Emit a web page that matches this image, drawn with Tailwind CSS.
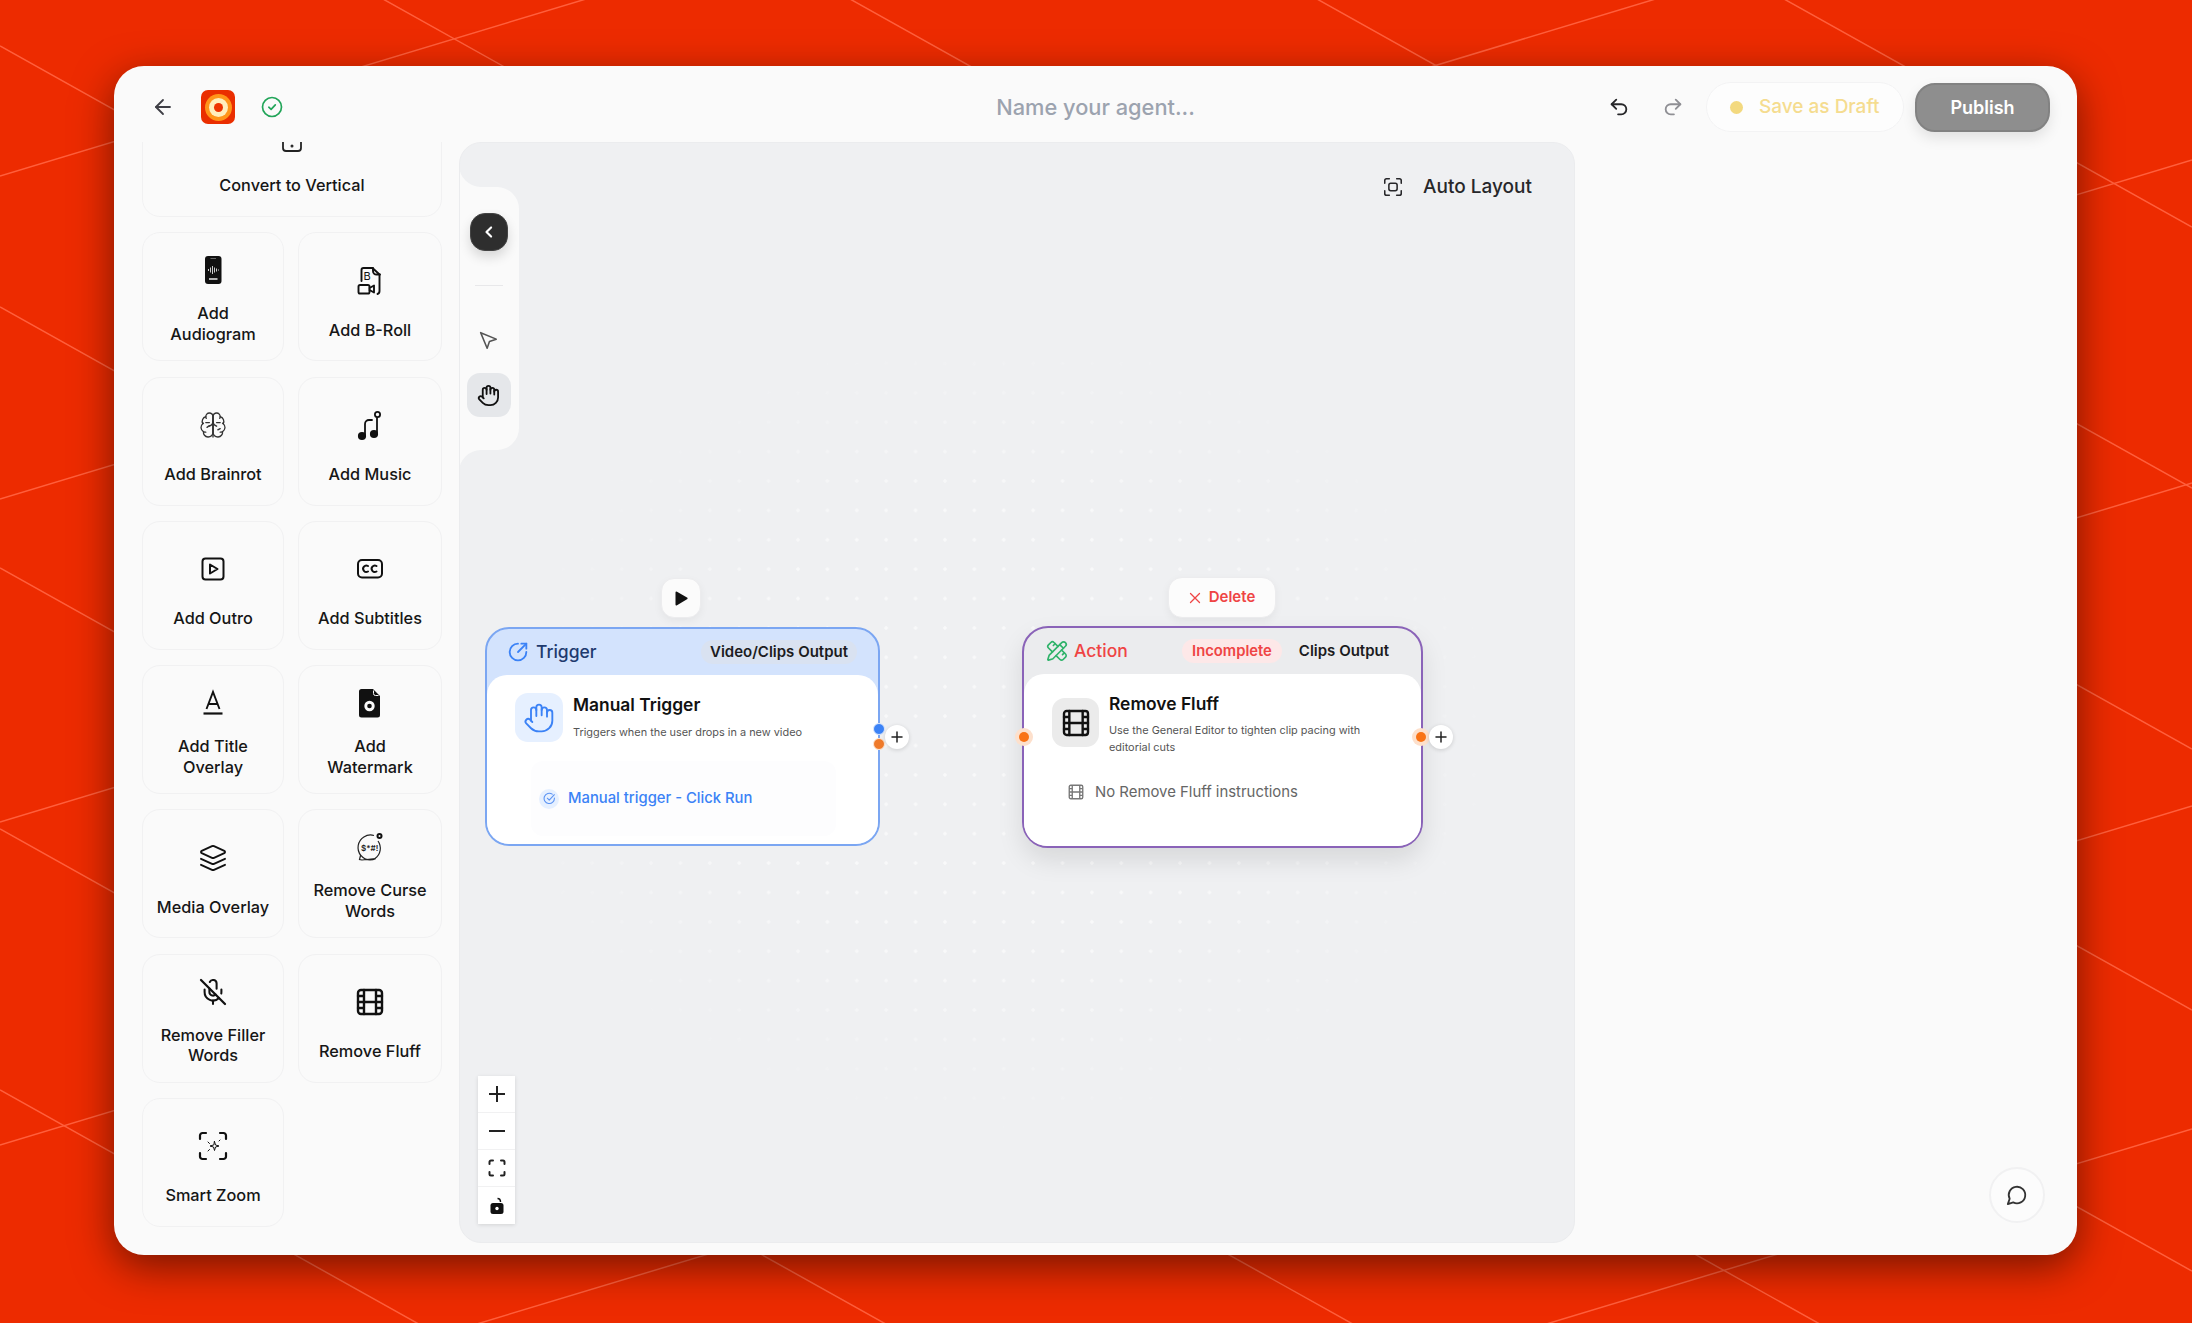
<!DOCTYPE html>
<html lang="en">
<head>
<meta charset="UTF-8">
<title>Agent builder</title>
<script src="https://cdn.jsdelivr.net/npm/@tailwindcss/browser@4"></script>
</head>
<body class="relative w-[2192px] h-[1323px] overflow-hidden bg-[#ed2b00] font-['Inter',sans-serif] text-[#161616]">

<!-- background lines -->
<svg class="absolute inset-0" width="2192" height="1323" fill="none" stroke="#ff5f3c" stroke-width="1.5">
  <path d="M0 -998L2192 227M0 -737L2192 488M0 -476L2192 749M0 -215L2192 1010M0 46L2192 1271M0 307L2192 1532M0 568L2192 1793M0 829L2192 2054M0 1090L2192 2315"/>
  <path d="M0 176L2192 -486M0 499L2192 -163M0 822L2192 160M0 1145L2192 483M0 1468L2192 806M0 1791L2192 1129"/>
</svg>

<div class="absolute left-[114px] top-[66px] w-[1963px] h-[1189px] flex flex-col rounded-[30px] bg-[#fafafa] shadow-[0_12px_40px_rgba(0,0,0,0.5)] overflow-hidden">

  <!-- header -->
  <header class="h-[76px] shrink-0 grid grid-cols-[1fr_auto_1fr] items-center pt-[6px] px-[27px]">
    <div class="flex items-center pl-[10px]">
      <svg class="w-6 h-6" viewBox="0 0 24 24" fill="none" stroke="#3f3f46" stroke-width="1.8" stroke-linecap="round" stroke-linejoin="round"><path d="m12 19-7-7 7-7"/><path d="M19 12H5"/></svg>
      <div class="ml-[26px] w-[34px] h-[34px] rounded-[7px] bg-[#ea2e00] flex items-center justify-center">
        <div class="w-[27px] h-[27px] rounded-full bg-[#ff951a] flex items-center justify-center">
          <div class="w-[19px] h-[19px] rounded-full bg-[#ffeebd] flex items-center justify-center">
            <div class="w-[9px] h-[9px] rounded-full bg-[#ee3300]"></div>
          </div>
        </div>
      </div>
      <svg class="ml-[26px] w-[22px] h-[22px]" viewBox="0 0 22 22" fill="none" stroke="#22a559" stroke-width="1.7" stroke-linecap="round" stroke-linejoin="round"><circle cx="11" cy="11" r="9.5"/><path d="m7.8 11.2 2.3 2.1 4.2-4.4"/></svg>
    </div>
    <div class="text-[21.8px] font-medium text-[#9ca3af]">Name your agent...</div>
    <div class="flex items-center justify-end">
      <svg class="w-[22px] h-[22px]" viewBox="0 0 24 24" fill="none" stroke="#27272a" stroke-width="2" stroke-linecap="round" stroke-linejoin="round"><path d="M9 14 4 9l5-5"/><path d="M4 9h10.5a5.5 5.5 0 0 1 0 11H11"/></svg>
      <svg class="ml-[32px] w-[22px] h-[22px]" viewBox="0 0 24 24" fill="none" stroke="#8f8f94" stroke-width="2" stroke-linecap="round" stroke-linejoin="round"><path d="m15 14 5-5-5-5"/><path d="M20 9H9.5a5.5 5.5 0 0 0 0 11H13"/></svg>
      <button class="ml-[22px] w-[198px] h-[50px] flex items-center pl-[23px] gap-[16px] rounded-[25px] bg-[#fdfdfd] border border-[#f3f3f4] text-[19px] font-medium text-[#f5dc8f]">
        <span class="w-[13px] h-[13px] rounded-full bg-[#f3d97f]"></span>Save as Draft
      </button>
      <button class="ml-[11px] w-[135px] h-[49px] rounded-[20px] bg-[#8e8e8e] border-2 border-[#828282] shadow-[0_6px_14px_rgba(0,0,0,0.1)] text-[18px] font-semibold text-white">Publish</button>
    </div>
  </header>

  <div class="flex-1 min-h-0 flex pb-3">

    <!-- node library -->
    <aside class="w-[345px] shrink-0 overflow-hidden pl-[28px]">
      <div class="-mt-[54px] grid grid-cols-[142px_144px] auto-rows-[129px] gap-x-[14px] gap-y-[15.3px] text-[16.3px] leading-[20.5px] font-medium text-center">

        <div class="col-span-2 flex flex-col items-center justify-center gap-[21px] pt-[9px] rounded-[18px] border-[1.5px] border-[#f1f1f2]">
          <svg class="w-9 h-9" viewBox="0 0 36 36" fill="none" stroke="#222" stroke-width="1.8"><rect x="9" y="5" width="18" height="28" rx="3"/><circle cx="18" cy="28" r=".6"/></svg>
          <span>Convert to Vertical</span>
        </div>

        <div class="flex flex-col items-center justify-center gap-[15px] pt-[3px] rounded-[18px] border-[1.5px] border-[#f1f1f2]">
          <svg class="w-9 h-9" viewBox="0 0 36 36"><rect x="10" y="4" width="16.5" height="28" rx="3" fill="#111"/><path d="M15.5 6.5h5.5" stroke="#666" stroke-width="1"/><path d="M13.5 17v2M15.5 15.5v5M17.5 14v8M19.5 15.5v5M21.5 16.5v3M23.5 17.5v1" stroke="#ccc" stroke-width="1"/><path d="M14 27h8.5" stroke="#ddd" stroke-width="1.6"/></svg>
          <span>Add<br>Audiogram</span>
        </div>
        <div class="flex flex-col items-center justify-center gap-[21px] pt-[9px] rounded-[18px] border-[1.5px] border-[#f1f1f2]">
          <svg class="w-9 h-9" viewBox="0 0 36 36" fill="none" stroke="#111" stroke-width="1.9" stroke-linecap="round" stroke-linejoin="round"><path d="M9.5 18V7a2 2 0 0 1 2-2h9l7 6.5V28a3 3 0 0 1-2 3"/><path d="M21 5v3a3.500 3.500 0 0 0 3.500 3.500H28"/><rect x="6.500" y="22" width="11" height="8.500" rx="1.600"/><path d="m17.500 25 4.500-2.500v7L17.500 27"/><text x="11.500" y="16.500" font-size="11" font-weight="400" fill="#111" stroke="none" font-family="Inter">B</text></svg>
          <span>Add B-Roll</span>
        </div>

        <div class="flex flex-col items-center justify-center gap-[21px] pt-[9px] rounded-[18px] border-[1.5px] border-[#f1f1f2]">
          <svg class="w-9 h-9" viewBox="-3 -3 30 30" fill="none" stroke="#333" stroke-width="1.1" stroke-linecap="round" stroke-linejoin="round"><path d="M12 5a3 3 0 1 0-5.997.125 4 4 0 0 0-2.526 5.770 4 4 0 0 0 .556 6.588A4 4 0 1 0 12 18Z"/><path d="M12 5a3 3 0 1 1 5.997.125 4 4 0 0 1 2.526 5.770 4 4 0 0 1-.556 6.588A4 4 0 1 1 12 18Z"/><path d="M15 13a4.500 4.500 0 0 1-3-4 4.500 4.500 0 0 1-3 4"/><path d="M17.599 6.500a3 3 0 0 0 .399-1.375M6.003 5.125A3 3 0 0 0 6.401 6.500M3.477 10.896a4 4 0 0 1 .585-.396M19.938 10.500a4 4 0 0 1 .585.396M6 18a4 4 0 0 1-1.967-.516M19.967 17.484A4 4 0 0 1 18 18"/><path d="M6 10h3M7 14l2-1.500M15 10h3M16 16l2-1M12 3v19"/></svg>
          <span>Add Brainrot</span>
        </div>
        <div class="flex flex-col items-center justify-center gap-[21px] pt-[9px] rounded-[18px] border-[1.5px] border-[#f1f1f2]">
          <svg class="w-9 h-9" viewBox="0 0 36 36" fill="none" stroke="#111" stroke-width="1.8" stroke-linecap="round"><circle cx="10" cy="29" r="3.200" fill="#111"/><circle cx="22" cy="27" r="3.200" fill="#111"/><path d="M13 29V17a4 4 0 0 1 4-4h3"/><path d="M25 27V11"/><circle cx="25.500" cy="7.500" r="2.600"/></svg>
          <span>Add Music</span>
        </div>

        <div class="flex flex-col items-center justify-center gap-[21px] pt-[9px] rounded-[18px] border-[1.5px] border-[#f1f1f2]">
          <svg class="w-9 h-9" viewBox="0 0 36 36" fill="none" stroke="#111" stroke-width="2" stroke-linejoin="round"><rect x="7.500" y="7.500" width="21" height="21" rx="3"/><path d="m15 13.500 7.500 4.500-7.500 4.500z"/></svg>
          <span>Add Outro</span>
        </div>
        <div class="flex flex-col items-center justify-center gap-[21px] pt-[9px] rounded-[18px] border-[1.5px] border-[#f1f1f2]">
          <svg class="w-9 h-9" viewBox="0 0 36 36" fill="none" stroke="#111" stroke-width="2" stroke-linecap="round"><rect x="6" y="9" width="24" height="17.500" rx="4"/><path d="M16 15a3.200 3.200 0 1 0 0 5.500"/><path d="M24.500 15a3.200 3.200 0 1 0 0 5.500"/></svg>
          <span>Add Subtitles</span>
        </div>

        <div class="flex flex-col items-center justify-center gap-[15px] pt-[3px] rounded-[18px] border-[1.5px] border-[#f1f1f2]">
          <svg class="w-9 h-9" viewBox="0 0 36 36" fill="none" stroke="#111" stroke-width="1.9"><path d="m11.500 24 6.500-17 6.500 17M13.500 19h9"/><path d="M8.500 28.500h19" stroke-width="2.200"/></svg>
          <span>Add Title<br>Overlay</span>
        </div>
        <div class="flex flex-col items-center justify-center gap-[15px] pt-[3px] rounded-[18px] border-[1.5px] border-[#f1f1f2]">
          <svg class="w-9 h-9" viewBox="0 0 36 36"><path d="M9.500 4H21l7 7v19a2.500 2.500 0 0 1-2.500 2.500h-16A2.500 2.500 0 0 1 7 30V6.500A2.500 2.500 0 0 1 9.500 4z" fill="#111"/><path d="M21.500 5.500v3a2 2 0 0 0 2 2h3" stroke="#fafafa" fill="none"/><circle cx="17.500" cy="21" r="5.200" fill="#fafafa"/><circle cx="17.500" cy="21" r="2.300" fill="#111"/></svg>
          <span>Add<br>Watermark</span>
        </div>

        <div class="flex flex-col items-center justify-center gap-[21px] pt-[9px] rounded-[18px] border-[1.5px] border-[#f1f1f2]">
          <svg class="w-9 h-9" viewBox="-3 -3 30 30" fill="none" stroke="#111" stroke-width="1.6" stroke-linecap="round" stroke-linejoin="round"><path d="m12.830 2.180a2 2 0 0 0-1.660 0L2.600 6.080a1 1 0 0 0 0 1.830l8.580 3.910a2 2 0 0 0 1.660 0l8.580-3.900a1 1 0 0 0 0-1.830Z"/><path d="m22 17.650-9.170 4.160a2 2 0 0 1-1.660 0L2 17.650"/><path d="m22 12.650-9.170 4.160a2 2 0 0 1-1.660 0L2 12.650"/></svg>
          <span>Media Overlay</span>
        </div>
        <div class="flex flex-col items-center justify-center gap-[15px] pt-[3px] rounded-[18px] border-[1.5px] border-[#f1f1f2]">
          <svg class="w-9 h-9" viewBox="0 0 36 36" fill="none" stroke="#222" stroke-width="1.2"><path d="M22 6.500A12.500 12.500 0 1 0 18 31c2 0 4-.500 5.500-1.300L10 31l-2.500-.500 1-4"/><path d="M26 12a12.500 12.500 0 0 1-3 17.500"/><circle cx="27.500" cy="7" r="3" fill="#111" stroke="none"/><circle cx="27.500" cy="7" r="1" fill="#fafafa" stroke="none"/><text x="9" y="21.500" font-size="8" font-weight="600" fill="#222" stroke="none" font-family="Inter">$*#!</text></svg>
          <span>Remove Curse<br>Words</span>
        </div>

        <div class="flex flex-col items-center justify-center gap-[15px] pt-[3px] rounded-[18px] border-[1.5px] border-[#f1f1f2]">
          <svg class="w-9 h-9" viewBox="-3 -3 30 30" fill="none" stroke="#111" stroke-width="1.7" stroke-linecap="round" stroke-linejoin="round"><path d="M2 2l20 20" stroke-width="1.900"/><path d="M18.890 13.230A7.120 7.120 0 0 0 19 12v-2"/><path d="M5 10v2a7 7 0 0 0 12 5"/><path d="M15 9.340V5a3 3 0 0 0-5.680-1.330"/><path d="M9 9v3a3 3 0 0 0 5.120 2.120"/><path d="M12 19v3"/></svg>
          <span>Remove Filler<br>Words</span>
        </div>
        <div class="flex flex-col items-center justify-center gap-[21px] pt-[9px] rounded-[18px] border-[1.5px] border-[#f1f1f2]">
          <svg class="w-9 h-9" viewBox="0 0 24 24" fill="none" stroke="#111" stroke-width="1.600" stroke-linecap="round" stroke-linejoin="round"><rect x="4" y="4" width="16" height="16" rx="2"/><path d="M8 4v16M16 4v16M4 8h4M4 12h16M4 16h4M16 8h4M16 16h4"/></svg>
          <span>Remove Fluff</span>
        </div>

        <div class="flex flex-col items-center justify-center gap-[21px] pt-[9px] rounded-[18px] border-[1.5px] border-[#f1f1f2]">
          <svg class="w-9 h-9" viewBox="0 0 36 36" fill="none" stroke="#111" stroke-width="2.2" stroke-linecap="round"><path d="M5 11V7.500A2.500 2.500 0 0 1 7.500 5H11M25 5h3.500A2.500 2.500 0 0 1 31 7.500V11M31 25v3.500a2.500 2.500 0 0 1-2.500 2.500H25M11 31H7.500A2.500 2.500 0 0 1 5 28.500V25"/><path d="M19.500 13.500l1 3.500 3.500 1-3.500 1-1 3.500-1-3.500-3.500-1 3.500-1z" stroke-width="1"/><path d="M13 23l1.500-1.500M13 14l1.500 1.500M25 12l-1 1" stroke-width="1"/></svg>
          <span>Smart Zoom</span>
        </div>
      </div>
    </aside>

    <!-- canvas -->
    <main class="relative w-[1116px] shrink-0 rounded-[22px] bg-[#eff0f2] border border-[#ebecee] overflow-hidden">
      <div class="absolute inset-0 opacity-60 bg-[radial-gradient(#ffffff_1.5px,transparent_1.7px)] bg-[size:29.4px_29.4px] [mask-image:radial-gradient(ellipse_500px_400px_at_540px_590px,#000_55%,transparent_100%)]"></div>

      <!-- tool rail -->
      <svg class="absolute left-[-1px] top-[-1px]" width="60" height="340" fill="#fafafa"><path d="M0 23A22 22 0 0 0 22 45H38A22 22 0 0 1 60 67V286A22 22 0 0 1 38 308H22A22 22 0 0 0 0 330Z"/></svg>
      <button class="absolute left-[10px] top-[70px] w-[38px] h-[38px] rounded-[15px] bg-[#2e2e2e] border border-[#444] shadow-[0_6px_12px_rgba(0,0,0,0.14)] flex items-center justify-center">
        <svg class="w-5 h-5" viewBox="0 0 24 24" fill="none" stroke="#fff" stroke-width="2.6" stroke-linecap="round" stroke-linejoin="round"><path d="m14.5 6.500-5.500 5.500 5.500 5.500"/></svg>
      </button>
      <div class="absolute left-[15px] top-[142px] w-[28px] h-px bg-[#e8e8ea]"></div>
      <svg class="absolute left-[17px] top-[186px] w-[22px] h-[22px]" viewBox="0 0 24 24" fill="none" stroke="#555" stroke-width="1.7" stroke-linejoin="round"><path d="m4 4 7.070 17 2.510-7.390L21 11.070z"/></svg>
      <div class="absolute left-[7px] top-[230px] w-[44px] h-[44px] rounded-[13px] bg-[#e5e7ea] flex items-center justify-center">
        <svg class="w-[23px] h-[23px] -ml-[2px]" viewBox="0 0 24 24" fill="none" stroke="#111" stroke-width="1.9" stroke-linecap="round" stroke-linejoin="round"><path d="M18 11V6a2 2 0 0 0-4 0"/><path d="M14 10V4a2 2 0 0 0-4 0v2"/><path d="M10 10.500V6a2 2 0 0 0-4 0v8"/><path d="M18 8a2 2 0 1 1 4 0v6a8 8 0 0 1-8 8h-2c-2.800 0-4.500-.860-5.990-2.340l-3.600-3.600a2 2 0 0 1 2.830-2.820L7 15"/></svg>
      </div>

      <!-- auto layout -->
      <div class="absolute right-[42px] top-[30px] flex items-center gap-[19px] text-[19px] font-medium text-[#27272a]">
        <svg class="w-[22px] h-[22px]" viewBox="0 0 24 24" fill="none" stroke="#27272a" stroke-width="1.7" stroke-linecap="round"><path d="M3 8V5a2 2 0 0 1 2-2h3M16 3h3a2 2 0 0 1 2 2v3M21 16v3a2 2 0 0 1-2 2h-3M8 21H5a2 2 0 0 1-2-2v-3"/><rect x="7.5" y="8" width="9" height="8" rx="2"/></svg>
        Auto Layout
      </div>

      <!-- trigger node -->
      <button class="absolute left-[201px] top-[435px] w-[40px] h-[40px] rounded-[13px] bg-[#fbfbfb] border border-[#ececee] shadow-[0_3px_8px_rgba(0,0,0,0.05)] flex items-center justify-center">
        <svg class="w-[14px] h-[15px]" viewBox="0 0 14 15" fill="#111"><path d="M1.5 1.500a1 1 0 0 1 1.500-.8l10 5.800a1 1 0 0 1 0 1.800L3 14.300a1 1 0 0 1-1.500-.8z"/></svg>
      </button>
      <div class="absolute left-[25px] top-[484px] w-[395px] h-[219px] flex flex-col rounded-[24px] border-2 border-[#7ba6f2] bg-[#d3e3fd]">
        <div class="h-[46px] shrink-0 flex items-center pl-[21px] pr-[21px]">
          <svg class="w-[20px] h-[20px]" viewBox="0 0 24 24" fill="none" stroke="#3b82f6" stroke-width="2.2" stroke-linecap="round" stroke-linejoin="round"><path d="M22 12A10 10 0 1 1 12 2"/><path d="M22 2 12 12"/><path d="M16 2h6v6"/></svg>
          <span class="ml-[8px] text-[17.5px] font-medium text-[#1e3a6e] pt-[1px]">Trigger</span>
          <span class="ml-auto h-[24px] px-[9px] flex items-center rounded-full bg-[#d9e2f1] text-[15px] font-semibold text-[#1c1c1e]">Video/Clips Output</span>
        </div>
        <div class="flex-1 rounded-t-[20px] rounded-b-[22px] bg-white">
          <div class="flex pl-[28px] pt-[18px]">
            <div class="w-[48px] h-[49px] shrink-0 rounded-[13px] bg-[#e6f0ff] flex items-center justify-center">
              <svg class="w-[32px] h-[32px]" viewBox="0 0 24 24" fill="none" stroke="#3b82f6" stroke-width="1.4" stroke-linecap="round" stroke-linejoin="round"><path d="M18 11V6a2 2 0 0 0-4 0"/><path d="M14 10V4a2 2 0 0 0-4 0v2"/><path d="M10 10.500V6a2 2 0 0 0-4 0v8"/><path d="M18 8a2 2 0 1 1 4 0v6a8 8 0 0 1-8 8h-2c-2.800 0-4.500-.860-5.990-2.340l-3.600-3.600a2 2 0 0 1 2.830-2.820L7 15"/></svg>
            </div>
            <div class="ml-[10px]">
              <div class="text-[17.4px] leading-[24px] font-semibold text-[#111]">Manual Trigger</div>
              <div class="mt-[7px] text-[10.9px] leading-[16px] text-[#555]">Triggers when the user drops in a new video</div>
            </div>
          </div>
          <div class="mt-[19px] ml-[44px] w-[305px] h-[75px] flex items-center pl-[8px] rounded-[12px] bg-[#fdfdfe]">
            <span class="w-[20px] h-[20px] rounded-full bg-[#e6f0ff] flex items-center justify-center">
              <svg class="w-[13px] h-[13px]" viewBox="0 0 24 24" fill="none" stroke="#5b93f3" stroke-width="2" stroke-linecap="round" stroke-linejoin="round"><path d="M21 11a9.500 9.500 0 1 1-4-7"/><path d="m8 11.500 3.500 3.500L21 5"/></svg>
            </span>
            <span class="ml-[9px] text-[14.8px] font-medium text-[#3b82f6]">Manual trigger - Click Run</span>
          </div>
        </div>
        <span class="absolute right-[-7px] top-[94px] w-[12px] h-[12px] rounded-full bg-[#3b82f6] border border-[#dbe7fb]"></span>
        <span class="absolute right-[-7px] top-[109px] w-[12px] h-[12px] rounded-full bg-[#ef7a2a] border border-[#fde6d3]"></span>
        <span class="absolute right-[-31px] top-[96px] w-[24px] h-[24px] rounded-full bg-white shadow-[0_1px_4px_rgba(0,0,0,0.15)] flex items-center justify-center">
          <svg class="w-[14px] h-[14px]" viewBox="0 0 14 14" stroke="#222" stroke-width="1.5" stroke-linecap="round"><path d="M7 2v10M2 7h10"/></svg>
        </span>
      </div>

      <!-- action node -->
      <button class="absolute left-[708px] top-[434px] w-[108px] h-[41px] rounded-[14px] bg-[#fcfcfc] border border-[#ececee] shadow-[0_3px_8px_rgba(0,0,0,0.05)] flex items-center justify-center gap-[8px] text-[15px] font-semibold text-[#ef4444]">
        <svg class="w-[12px] h-[12px]" viewBox="0 0 12 12" stroke="#ef4444" stroke-width="1.3" stroke-linecap="round"><path d="m1.5 1.500 9 9M10.500 1.500l-9 9"/></svg>
        Delete
      </button>
      <div class="absolute left-[562px] top-[483px] w-[401px] h-[222px] flex flex-col rounded-[26px] border-2 border-[#8a63b8] bg-[#ebecee] shadow-[0_12px_26px_rgba(0,0,0,0.1)]">
        <div class="h-[46px] shrink-0 flex items-center pl-[22px] pr-[32px]">
          <svg class="w-[22px] h-[22px]" viewBox="0 0 24 24" fill="none" stroke="#2fb36a" stroke-width="1.8" stroke-linecap="round" stroke-linejoin="round"><path d="M13 7 8.700 2.700a2.410 2.410 0 0 0-3.400 0L2.700 5.300a2.410 2.410 0 0 0 0 3.400L7 13"/><path d="m8 6 2-2"/><path d="m18 16 2-2"/><path d="m17 11 4.300 4.300c.940.940.940 2.460 0 3.400l-2.600 2.600c-.940.940-2.460.940-3.400 0L11 17"/><path d="M21.174 6.812a1 1 0 0 0-3.986-3.987L3.842 16.174a2 2 0 0 0-.5.830l-1.321 4.352a.5.5 0 0 0 .623.622l4.353-1.320a2 2 0 0 0 .830-.497z"/><path d="m15 5 4 4"/></svg>
          <span class="ml-[6px] text-[17.5px] font-medium text-[#ef4444]">Action</span>
          <span class="ml-auto h-[24px] px-[10px] flex items-center rounded-full bg-[#fde8e8] text-[14.8px] font-semibold text-[#ef4444]">Incomplete</span>
          <span class="ml-[17px] text-[15px] font-semibold text-[#1c1c1e]">Clips Output</span>
        </div>
        <div class="flex-1 rounded-t-[20px] rounded-b-[23px] bg-white">
          <div class="flex pl-[28px] pt-[24px]">
            <div class="w-[47px] h-[49px] shrink-0 rounded-[13px] bg-[#ebebeb] flex items-center justify-center">
              <svg class="w-[32px] h-[32px]" viewBox="0 0 24 24" fill="none" stroke="#111" stroke-width="1.8" stroke-linecap="round" stroke-linejoin="round"><rect x="3" y="3" width="18" height="18" rx="2"/><path d="M7 3v18M17 3v18M3 7.500h4M3 12h18M3 16.500h4M17 7.500h4M17 16.500h4"/></svg>
            </div>
            <div class="ml-[10px] w-[290px]">
              <div class="text-[17.4px] leading-[24px] -mt-[6px] font-semibold text-[#111]">Remove Fluff</div>
              <div class="mt-[6px] text-[10.9px] leading-[16.5px] text-[#555]">Use the General Editor to tighten clip pacing with editorial cuts</div>
            </div>
          </div>
          <div class="mt-[26px] ml-[43px] flex items-center text-[14.9px] text-[#666]">
            <svg class="w-[18px] h-[18px]" viewBox="0 0 24 24" fill="none" stroke="#777" stroke-width="1.8" stroke-linejoin="round"><rect x="3" y="3" width="18" height="18" rx="2"/><path d="M7 3v18M17 3v18M3 7.500h4M3 12h18M3 16.500h4M17 7.500h4M17 16.500h4"/></svg>
            <span class="ml-[10px]">No Remove Fluff instructions</span>
          </div>
        </div>
        <span class="absolute left-[-9px] top-[100px] w-[18px] h-[18px] rounded-full bg-[#fde0cc] flex items-center justify-center"><span class="w-[10px] h-[10px] rounded-full bg-[#f97316]"></span></span>
        <span class="absolute right-[-9px] top-[100px] w-[18px] h-[18px] rounded-full bg-[#fde0cc] flex items-center justify-center"><span class="w-[10px] h-[10px] rounded-full bg-[#f97316]"></span></span>
        <span class="absolute right-[-32px] top-[97px] w-[24px] h-[24px] rounded-full bg-white shadow-[0_1px_4px_rgba(0,0,0,0.15)] flex items-center justify-center">
          <svg class="w-[14px] h-[14px]" viewBox="0 0 14 14" stroke="#222" stroke-width="1.5" stroke-linecap="round"><path d="M7 2v10M2 7h10"/></svg>
        </span>
      </div>

      <!-- zoom controls -->
      <div class="absolute left-[18px] top-[933px] w-[37px] flex flex-col divide-y divide-[#f1f1f2] bg-white shadow-[0_1px_4px_rgba(0,0,0,0.12)]">
        <button class="h-[37px] flex items-center justify-center"><svg class="w-[18px] h-[18px]" viewBox="0 0 18 18" stroke="#222" stroke-width="2"><path d="M9 1v16M1 9h16"/></svg></button>
        <button class="h-[37px] flex items-center justify-center"><svg class="w-[18px] h-[18px]" viewBox="0 0 18 18" stroke="#222" stroke-width="2"><path d="M1 9h16"/></svg></button>
        <button class="h-[37px] flex items-center justify-center"><svg class="w-[18px] h-[18px]" viewBox="0 0 18 18" fill="none" stroke="#222" stroke-width="2" stroke-linecap="round"><path d="M1.5 5V3A1.500 1.500 0 0 1 3 1.500h2M13 1.500h2A1.500 1.500 0 0 1 16.500 3v2M16.500 13v2a1.500 1.500 0 0 1-1.500 1.500h-2M5 16.500H3A1.500 1.500 0 0 1 1.500 15v-2"/></svg></button>
        <button class="h-[37px] flex items-center justify-center"><svg class="w-[18px] h-[18px]" viewBox="0 0 18 18"><path d="M9.5 1.500c2 0 3 1.200 3 3.500" fill="none" stroke="#111" stroke-width="1.5"/><rect x="2.5" y="6" width="13" height="11" rx="2.5" fill="#111"/><circle cx="9" cy="11.500" r="1.700" fill="#fff"/></svg></button>
      </div>
    </main>
  </div>

  <!-- chat -->
  <button class="absolute right-[32px] bottom-[32px] w-[56px] h-[56px] rounded-full bg-[#fcfcfc] border-2 border-[#f1f1f2] flex items-center justify-center">
    <svg class="w-[22px] h-[22px]" viewBox="0 0 24 24" fill="none" stroke="#333" stroke-width="2" stroke-linecap="round" stroke-linejoin="round"><path d="M7.900 20A9 9 0 1 0 4 16.100L2 22Z"/></svg>
  </button>
</div>
</body>
</html>
